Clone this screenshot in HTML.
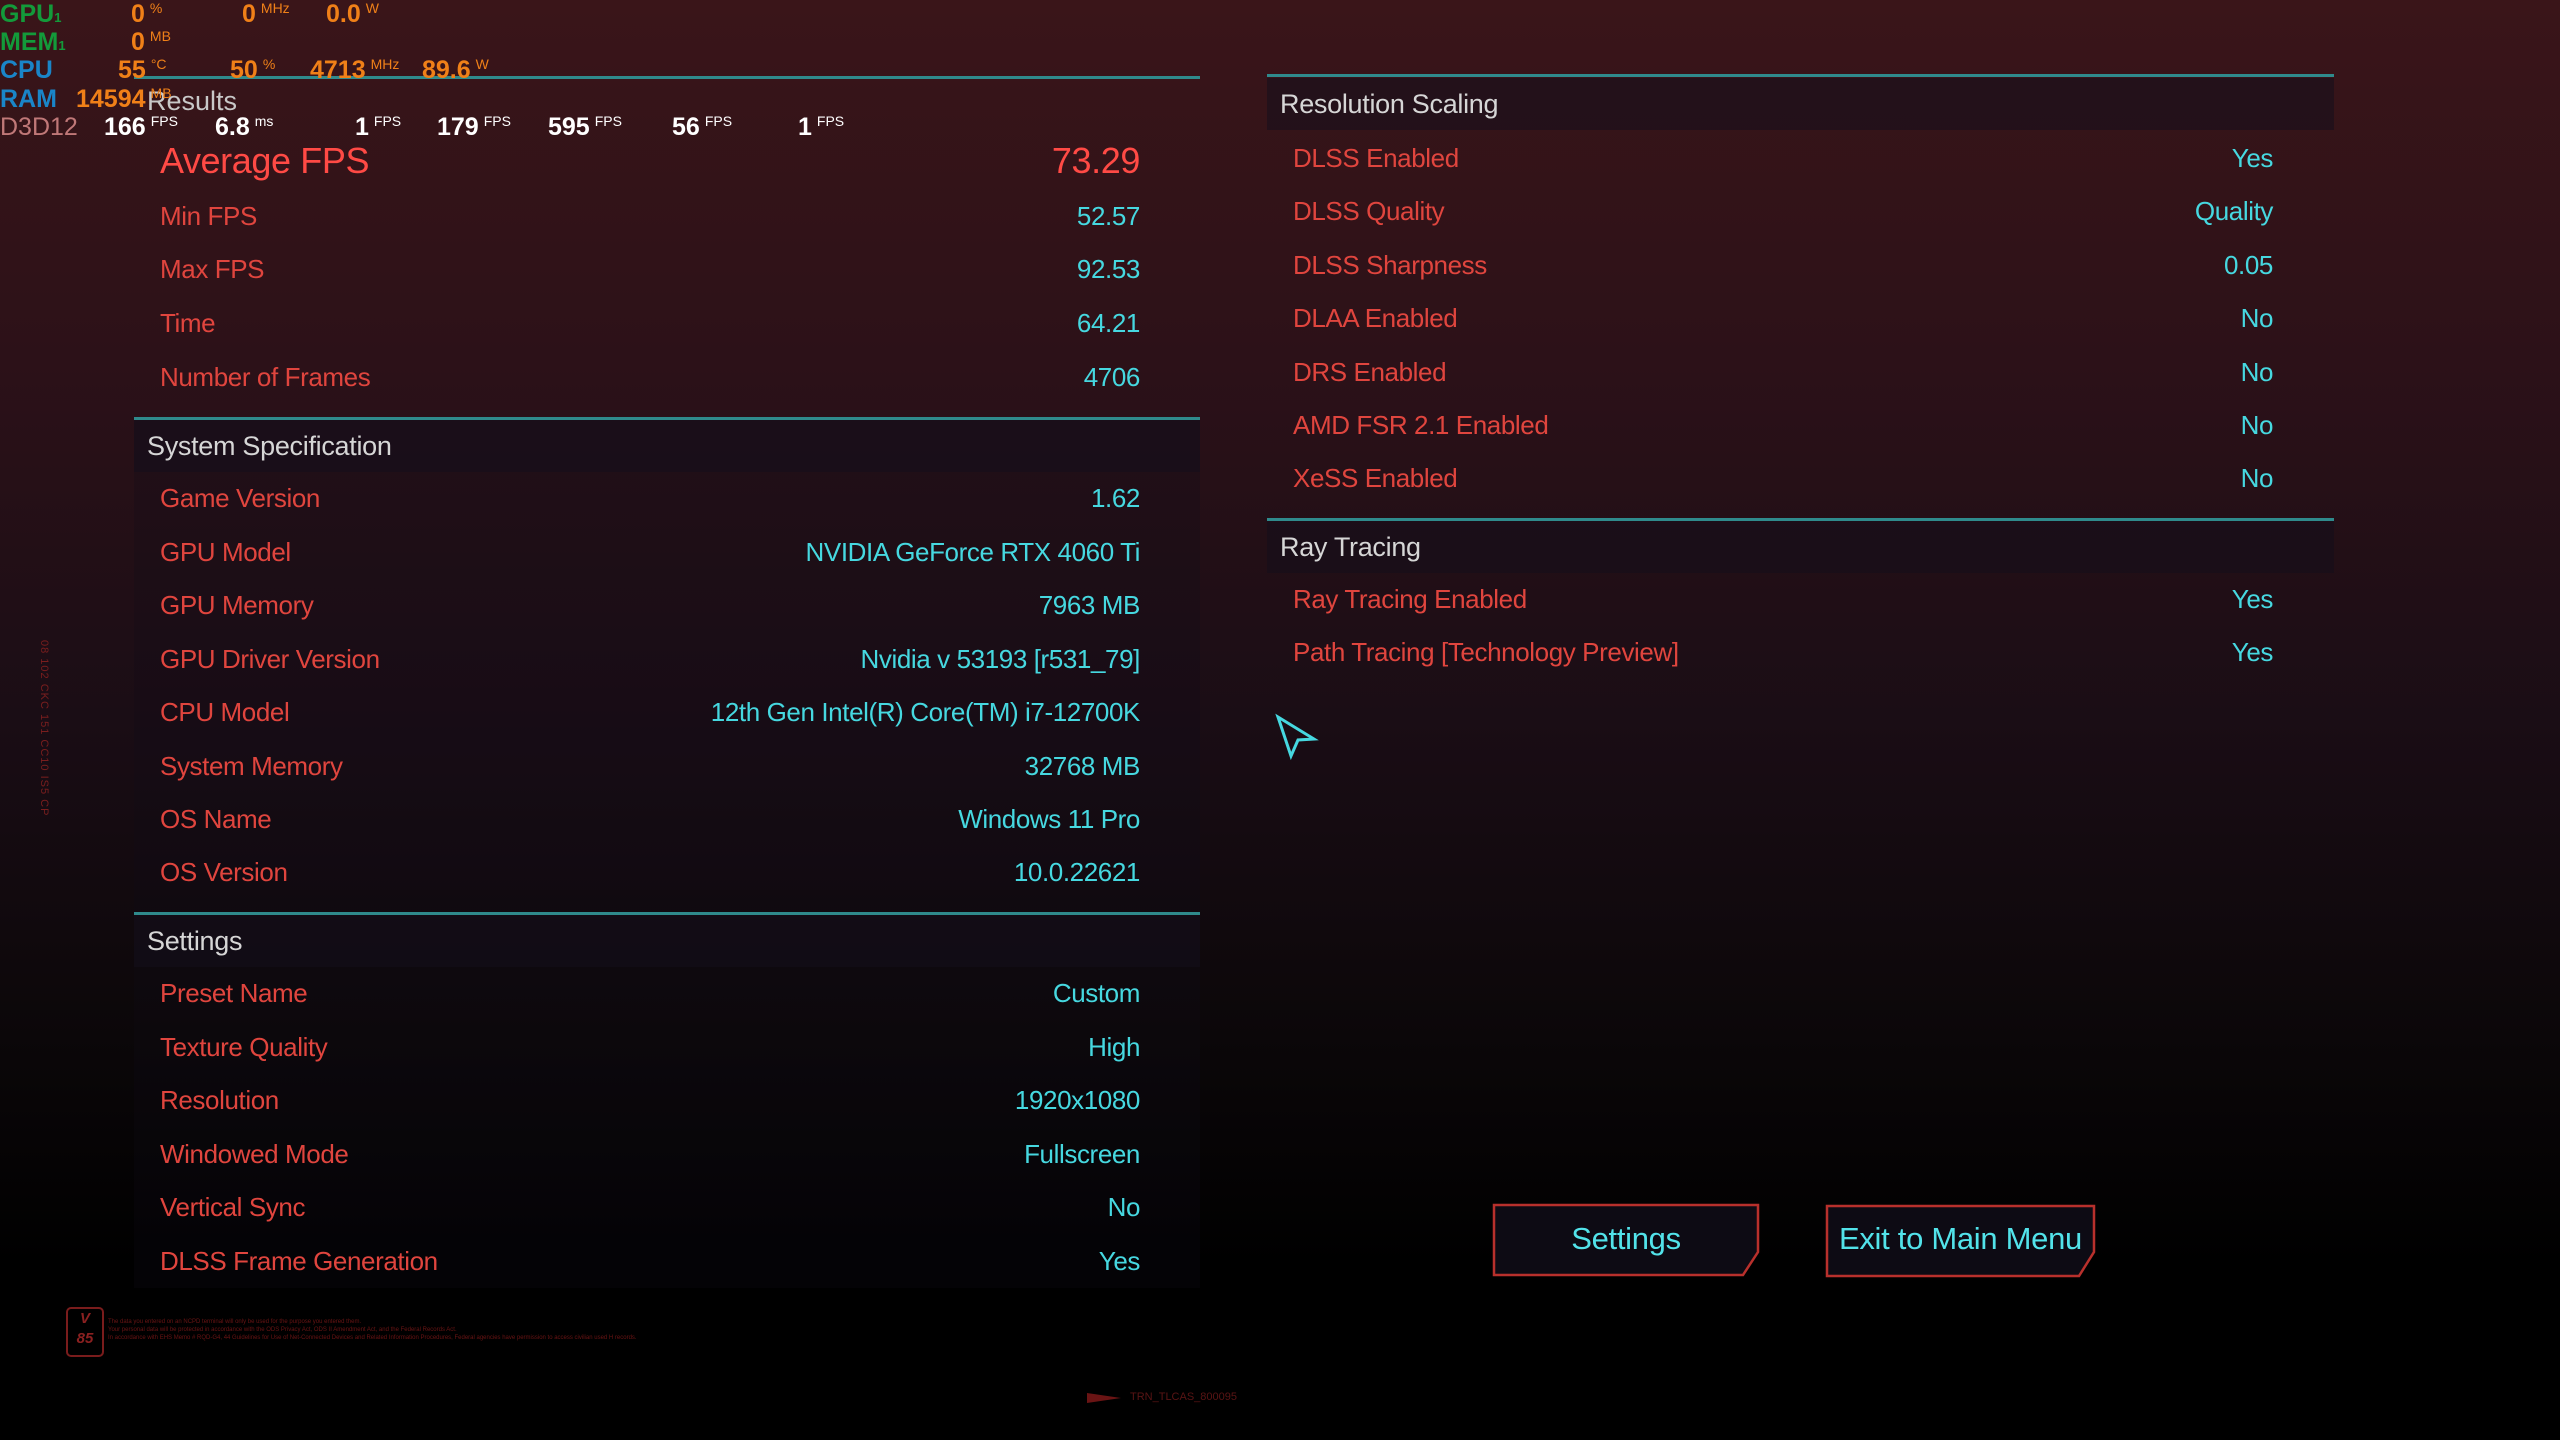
<!DOCTYPE html>
<html><head><meta charset="utf-8"><style>
html,body{margin:0;padding:0}
body{width:2560px;height:1440px;position:relative;overflow:hidden;font-family:"Liberation Sans",sans-serif;
background:linear-gradient(180deg,#3a1519 0%,#2c1118 25%,#1a0d15 50%,#0b0709 72%,#000 88%,#000 100%);}
.abs{position:absolute}
.line{position:absolute;height:3px;background:#2f8a8c}
.hdr{position:absolute;background:rgba(20,14,28,0.55);color:#d6d6d6;font-size:27px;line-height:52px;padding-left:13px;box-sizing:border-box;letter-spacing:-0.3px}
.panel{position:absolute;background:rgba(14,10,22,0.25)}
.row{position:absolute;font-size:26px;height:40px;line-height:40px;letter-spacing:-0.4px}
.row .l{position:absolute;left:0;color:#e0453e}
.row .v{position:absolute;right:0;color:#46d8e0}
.osd{position:absolute;font-family:"Liberation Sans Narrow","Liberation Sans",sans-serif;font-weight:bold;font-size:25px;line-height:28px;white-space:nowrap}
.osd sup{font-size:14px;vertical-align:top;line-height:16px;margin-left:5px;font-weight:normal}
.btn{position:absolute;top:1205px;height:68px;color:#52e3ea;font-size:31px;text-align:center;line-height:68px;letter-spacing:-0.3px}
</style></head><body>

<div class="line" style="left:134px;top:76px;width:1066px"></div>
<div class="panel" style="left:134px;top:418px;width:1066px;height:870px"></div>
<div class="abs" style="left:147px;top:86px;font-size:27px;color:#c8c8c8">Results</div>
<div class="row" style="left:160px;width:980px;top:136px;height:50px;line-height:50px;font-size:36px"><span class="l" style="color:#ff4a45">Average FPS</span><span class="v" style="color:#ff4a45">73.29</span></div>
<div class="row" style="left:160px;width:980px;top:196px"><span class="l">Min FPS</span><span class="v">52.57</span></div>
<div class="row" style="left:160px;width:980px;top:249px"><span class="l">Max FPS</span><span class="v">92.53</span></div>
<div class="row" style="left:160px;width:980px;top:303px"><span class="l">Time</span><span class="v">64.21</span></div>
<div class="row" style="left:160px;width:980px;top:357px"><span class="l">Number of Frames</span><span class="v">4706</span></div>

<div class="line" style="left:134px;top:417px;width:1066px"></div>
<div class="hdr" style="left:134px;top:420px;width:1066px">System Specification</div>
<div class="row" style="left:160px;width:980px;top:478px"><span class="l">Game Version</span><span class="v">1.62</span></div>
<div class="row" style="left:160px;width:980px;top:532px"><span class="l">GPU Model</span><span class="v">NVIDIA GeForce RTX 4060 Ti</span></div>
<div class="row" style="left:160px;width:980px;top:585px"><span class="l">GPU Memory</span><span class="v">7963 MB</span></div>
<div class="row" style="left:160px;width:980px;top:639px"><span class="l">GPU Driver Version</span><span class="v">Nvidia v 53193 [r531_79]</span></div>
<div class="row" style="left:160px;width:980px;top:692px"><span class="l">CPU Model</span><span class="v">12th Gen Intel(R) Core(TM) i7-12700K</span></div>
<div class="row" style="left:160px;width:980px;top:746px"><span class="l">System Memory</span><span class="v">32768 MB</span></div>
<div class="row" style="left:160px;width:980px;top:799px"><span class="l">OS Name</span><span class="v">Windows 11 Pro</span></div>
<div class="row" style="left:160px;width:980px;top:852px"><span class="l">OS Version</span><span class="v">10.0.22621</span></div>

<div class="line" style="left:134px;top:912px;width:1066px"></div>
<div class="hdr" style="left:134px;top:915px;width:1066px">Settings</div>
<div class="row" style="left:160px;width:980px;top:973px"><span class="l">Preset Name</span><span class="v">Custom</span></div>
<div class="row" style="left:160px;width:980px;top:1027px"><span class="l">Texture Quality</span><span class="v">High</span></div>
<div class="row" style="left:160px;width:980px;top:1080px"><span class="l">Resolution</span><span class="v">1920x1080</span></div>
<div class="row" style="left:160px;width:980px;top:1134px"><span class="l">Windowed Mode</span><span class="v">Fullscreen</span></div>
<div class="row" style="left:160px;width:980px;top:1187px"><span class="l">Vertical Sync</span><span class="v">No</span></div>
<div class="row" style="left:160px;width:980px;top:1241px"><span class="l">DLSS Frame Generation</span><span class="v">Yes</span></div>

<div class="line" style="left:1267px;top:74px;width:1067px"></div>
<div class="hdr" style="left:1267px;top:78px;width:1067px">Resolution Scaling</div>
<div class="row" style="left:1293px;width:980px;top:138px"><span class="l">DLSS Enabled</span><span class="v">Yes</span></div>
<div class="row" style="left:1293px;width:980px;top:191px"><span class="l">DLSS Quality</span><span class="v">Quality</span></div>
<div class="row" style="left:1293px;width:980px;top:245px"><span class="l">DLSS Sharpness</span><span class="v">0.05</span></div>
<div class="row" style="left:1293px;width:980px;top:298px"><span class="l">DLAA Enabled</span><span class="v">No</span></div>
<div class="row" style="left:1293px;width:980px;top:352px"><span class="l">DRS Enabled</span><span class="v">No</span></div>
<div class="row" style="left:1293px;width:980px;top:405px"><span class="l">AMD FSR 2.1 Enabled</span><span class="v">No</span></div>
<div class="row" style="left:1293px;width:980px;top:458px"><span class="l">XeSS Enabled</span><span class="v">No</span></div>
<div class="line" style="left:1267px;top:518px;width:1067px"></div>
<div class="hdr" style="left:1267px;top:521px;width:1067px">Ray Tracing</div>
<div class="row" style="left:1293px;width:980px;top:579px"><span class="l">Ray Tracing Enabled</span><span class="v">Yes</span></div>
<div class="row" style="left:1293px;width:980px;top:632px"><span class="l">Path Tracing [Technology Preview]</span><span class="v">Yes</span></div>

<svg class="abs" style="left:1272px;top:712px" width="50" height="50"><path d="M6 5 L42 27 L26 28 L19 44 Z" fill="none" stroke="#46d8e0" stroke-width="3" stroke-linejoin="miter"/></svg>

<svg class="abs" style="left:1490px;top:1200px" width="630" height="80">
<path d="M4 5 L268 5 L268 52 L253 75 L4 75 Z" fill="#0d0b14" stroke="#b8302c" stroke-width="2.5"/>
<path d="M337 6 L604 6 L604 52 L589 76 L337 76 Z" fill="#0d0b14" stroke="#b8302c" stroke-width="2.5"/>
</svg>
<div class="btn" style="left:1494px;width:264px">Settings</div>
<div class="btn" style="left:1827px;width:267px">Exit to Main Menu</div>

<div class="osd" style="left:0;top:0;color:#139a3a">GPU<span style="font-size:13px">1</span></div>
<div class="osd" style="left:0;top:28px;color:#139a3a">MEM<span style="font-size:13px">1</span></div>
<div class="osd" style="left:0;top:56px;color:#1a85c8">CPU</div>
<div class="osd" style="left:0;top:85px;color:#1a85c8">RAM</div>
<div class="osd" style="left:0;top:113px;color:#c07878;font-weight:normal">D3D12</div>
<div class="osd" style="left:131px;top:0;color:#f08018">0<sup>%</sup></div>
<div class="osd" style="left:242px;top:0;color:#f08018">0<sup>MHz</sup></div>
<div class="osd" style="left:326px;top:0;color:#f08018">0.0<sup>W</sup></div>
<div class="osd" style="left:131px;top:28px;color:#f08018">0<sup>MB</sup></div>
<div class="osd" style="left:118px;top:56px;color:#f08018">55<sup>°C</sup></div>
<div class="osd" style="left:230px;top:56px;color:#f08018">50<sup>%</sup></div>
<div class="osd" style="left:310px;top:56px;color:#f08018">4713<sup>MHz</sup></div>
<div class="osd" style="left:422px;top:56px;color:#f08018">89.6<sup>W</sup></div>
<div class="osd" style="left:76px;top:85px;color:#f08018">14594<sup>MB</sup></div>
<div class="osd" style="left:104px;top:113px;color:#fff">166<sup>FPS</sup></div>
<div class="osd" style="left:215px;top:113px;color:#fff">6.8<sup>ms</sup></div>
<div class="osd" style="left:355px;top:113px;color:#fff">1<sup>FPS</sup></div>
<div class="osd" style="left:437px;top:113px;color:#fff">179<sup>FPS</sup></div>
<div class="osd" style="left:548px;top:113px;color:#fff">595<sup>FPS</sup></div>
<div class="osd" style="left:672px;top:113px;color:#fff">56<sup>FPS</sup></div>
<div class="osd" style="left:798px;top:113px;color:#fff">1<sup>FPS</sup></div>

<div class="abs" style="left:38px;top:640px;color:#7a1e1e;font-size:11px;writing-mode:vertical-rl;letter-spacing:1px">08 102 CKC 151 CC10 IS5 CP</div>

<div class="abs" style="left:66px;top:1307px;width:34px;height:46px;border:2px solid #7a1c1c;border-radius:5px;color:#8a2020;font-size:15px;font-weight:bold;font-style:italic;text-align:center;line-height:20px">V<br>85</div>
<div class="abs" style="left:108px;top:1318px;color:#6a1414;font-size:6px;line-height:8px;white-space:nowrap">The data you entered on an NCPD terminal will only be used for the purpose you entered them.<br>Your personal data will be protected in accordance with the ODS Privacy Act, ODS II Amendment Act, and the Federal Records Act.<br>In accordance with EHS Memo # RQD-G4, 44 Guidelines for Use of Net-Connected Devices and Related Information Procedures, Federal agencies have permission to access civilian used H records.</div>
<svg class="abs" style="left:1085px;top:1390px" width="40" height="16"><path d="M2 3 L36 8 L2 13 Z" fill="#6a1414"/></svg>
<div class="abs" style="left:1130px;top:1391px;color:#5a1414;font-size:11px">TRN_TLCAS_800095</div>
</body></html>
